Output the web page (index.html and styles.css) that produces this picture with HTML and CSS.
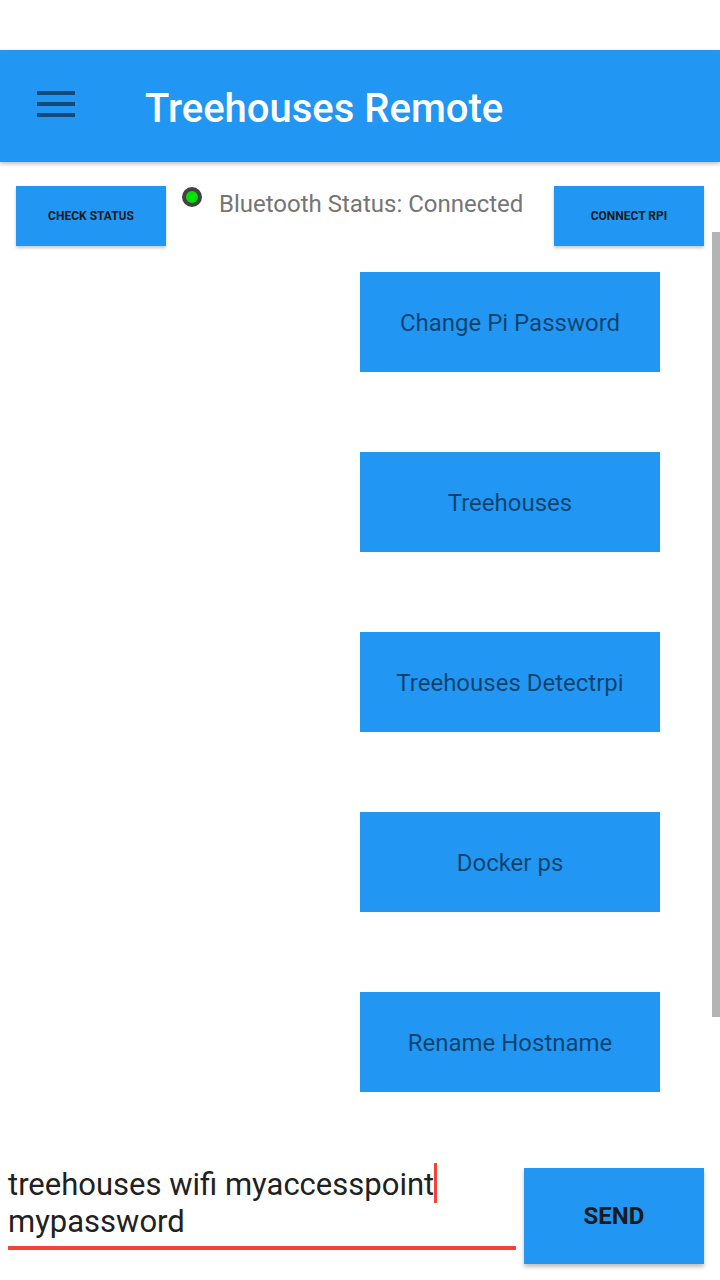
FILE: index.html
```html
<!DOCTYPE html>
<html>
<head>
<meta charset="utf-8">
<link rel="stylesheet" href="styles.css">
</head>
<body>
<div class="screen">
  <div class="statusbar"></div>
  <header class="appbar">
    <svg class="menu" width="38" height="26" viewBox="0 0 38 26">
      <rect x="0" y="0" width="38" height="4" fill="#124a75"/>
      <rect x="0" y="11" width="38" height="4" fill="#124a75"/>
      <rect x="0" y="22" width="38" height="4" fill="#124a75"/>
    </svg>
    <h1 class="title">Treehouses Remote</h1>
  </header>
  <main class="content">
    <div class="toprow">
      <button class="small-btn">CHECK STATUS</button>
      <div class="status">
        <span class="dot"></span>
        <span class="status-text">Bluetooth Status: Connected</span>
      </div>
      <button class="small-btn">CONNECT RPI</button>
    </div>
    <div class="commands">
      <button class="cmd">Change Pi Password</button>
      <button class="cmd">Treehouses</button>
      <button class="cmd">Treehouses Detectrpi</button>
      <button class="cmd">Docker ps</button>
      <button class="cmd">Rename Hostname</button>
    </div>
    <div class="inputrow">
      <div class="field">
        <div class="field-text"><span>treehouses wifi myaccesspoint</span><span class="caret"></span><br>mypassword</div>
        <div class="underline"></div>
      </div>
      <button class="send">SEND</button>
    </div>
  </main>
  <div class="scrollbar"></div>
</div>
</body>
</html>
```
FILE: styles.css
```css
html, body {
  margin: 0;
  padding: 0;
  background: #ffffff;
}
.screen {
  position: relative;
  width: 720px;
  height: 1280px;
  overflow: hidden;
  font-family: Roboto, "Noto Sans", sans-serif;
  background: #ffffff;
}
.statusbar {
  height: 50px;
  background: #ffffff;
}
.appbar {
  height: 112px;
  background: #2196f3;
  display: flex;
  align-items: center;
  box-shadow: 0 2px 4px rgba(0,0,0,0.25);
  position: relative;
  z-index: 1;
}
.menu {
  margin-left: 37px;
  margin-top: -4px;
  flex: none;
}
.title {
  margin: 0 0 0 70px;
  color: #ffffff;
  font-size: 40px;
  font-weight: 500;
  line-height: 1;
  margin-top: 5px;
}
.content {
  display: flex;
  flex-direction: column;
}
.toprow {
  display: flex;
  align-items: flex-start;
  padding: 24px 16px 0 16px;
}
button {
  border: none;
  font-family: Roboto, "Noto Sans", sans-serif;
  padding: 0;
  cursor: pointer;
}
.small-btn {
  width: 150px;
  height: 60px;
  background: #2196f3;
  color: #1a1a1a;
  font-size: 12px;
  font-weight: 700;
  box-shadow: 0 2px 3px rgba(0,0,0,0.22);
  flex: none;
}
.status {
  flex: 1;
  display: flex;
  align-items: flex-start;
  padding-left: 16px;
}
.dot {
  width: 12px;
  height: 12px;
  border-radius: 50%;
  background: #00e000;
  border: 4px solid #424242;
  margin-top: 1px;
  flex: none;
}
.status-text {
  color: #757575;
  font-size: 24px;
  margin-left: 17px;
  line-height: 36px;
}
.commands {
  display: flex;
  flex-direction: column;
  align-items: flex-end;
  padding-right: 60px;
  margin-top: 26px;
  gap: 80px;
}
.cmd {
  width: 300px;
  height: 100px;
  background: #2196f3;
  color: rgba(0,0,0,0.56);
  font-size: 24px;
  padding-top: 2px;
}
.inputrow {
  display: flex;
  align-items: flex-start;
  margin-top: 76px;
  padding: 0 16px 0 8px;
}
.field {
  width: 508px;
  flex: none;
}
.field-text {
  color: #212121;
  font-size: 31px;
  line-height: 37px;
  margin-top: -5px;
}
.caret {
  display: inline-block;
  width: 3px;
  height: 40px;
  background: #f44336;
  vertical-align: -8px;
}
.underline {
  height: 4px;
  background: #f44336;
  margin-top: 6px;
}
.send {
  margin-left: 8px;
  width: 180px;
  height: 96px;
  background: #2196f3;
  color: #1a1a1a;
  font-size: 24px;
  font-weight: 700;
  box-shadow: 0 3px 4px rgba(0,0,0,0.25);
  flex: none;
}
.scrollbar {
  position: absolute;
  right: 0;
  top: 232px;
  width: 8px;
  height: 785px;
  background: #b4b4b4;
}
```
